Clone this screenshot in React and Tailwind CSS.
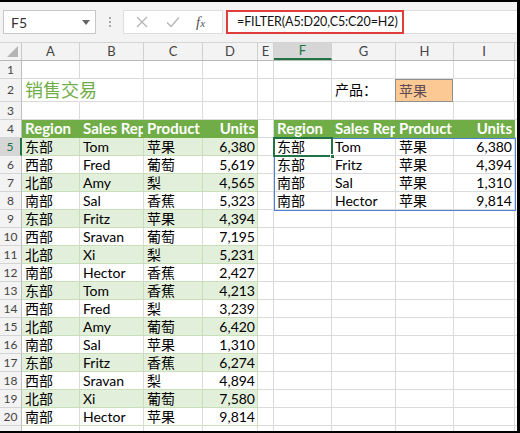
import React from 'react';

const COLS = [
    { key: 'A', w: 'w-[58px]' },
    { key: 'B', w: 'w-[64px]' },
    { key: 'C', w: 'w-[59px]' },
    { key: 'D', w: 'w-[55px]' },
    { key: 'E', w: 'w-[16px]' },
    { key: 'F', w: 'w-[58px]' },
    { key: 'G', w: 'w-[64px]' },
    { key: 'H', w: 'w-[58px]' },
    { key: 'I', w: 'w-[61px]' },
];

const SALES = [
    ['东部', 'Tom', '苹果', '6,380'],
    ['西部', 'Fred', '葡萄', '5,619'],
    ['北部', 'Amy', '梨', '4,565'],
    ['南部', 'Sal', '香蕉', '5,323'],
    ['东部', 'Fritz', '苹果', '4,394'],
    ['西部', 'Sravan', '葡萄', '7,195'],
    ['北部', 'Xi', '梨', '5,231'],
    ['南部', 'Hector', '香蕉', '2,427'],
    ['东部', 'Tom', '香蕉', '4,213'],
    ['西部', 'Fred', '梨', '3,239'],
    ['北部', 'Amy', '葡萄', '6,420'],
    ['南部', 'Sal', '苹果', '1,310'],
    ['东部', 'Fritz', '香蕉', '6,274'],
    ['西部', 'Sravan', '梨', '4,894'],
    ['北部', 'Xi', '葡萄', '7,580'],
    ['南部', 'Hector', '苹果', '9,814'],
];

const FILTERED = [
    ['东部', 'Tom', '苹果', '6,380'],
    ['东部', 'Fritz', '苹果', '4,394'],
    ['南部', 'Sal', '苹果', '1,310'],
    ['南部', 'Hector', '苹果', '9,814'],
];

const HEADERS = ['Region', 'Sales Rep', 'Product', 'Units'];

const GRID = 'border-[#dadada]';
const HEAD = 'bg-[#70ad47] text-white font-bold text-[15px] border-[#70ad47]';
const BAND = 'bg-[#e2efda] border-[#c9dfba]';
const PLAIN = 'bg-white border-r-[#dadada] border-b-[#c9dfba]';

// builds the 9 cells (A..I) for one sheet row
function buildRow(n) {
    const cells = COLS.map(() => ({ text: '', cls: GRID }));

    if (n === 2) {
        cells[0] = { text: '销售交易', cls: 'border-b-[#dadada] border-r-transparent overflow-visible text-[18px] text-[#70ad47]', wide: true };
        cells[6] = { text: '产品：', cls: GRID };
        cells[7] = { text: '苹果', cls: 'bg-[#fcc995] border-[#8f8f8f] border-l border-t -ml-px text-[#5e4a52]' };
    }
    if (n === 4) {
        [0, 1, 2, 3, 5, 6, 7, 8].forEach((i) => {
            const h = HEADERS[i > 4 ? i - 5 : i];
            cells[i] = { text: h, cls: HEAD, right: h === 'Units' };
        });
    }
    if (n >= 5 && n <= 20) {
        const rec = SALES[n - 5];
        const style = n % 2 === 1 ? BAND : PLAIN;
        rec.forEach((t, i) => {
            cells[i] = { text: t, cls: style, right: i === 3 };
        });
        cells[3].cls = style + ' !border-r-[#c9dfba]';
    }
    if (n >= 5 && n <= 8) {
        FILTERED[n - 5].forEach((t, i) => {
            cells[5 + i] = { text: t, cls: GRID, right: i === 3 };
        });
    }
    return cells;
}

function SheetRow({ n }) {
    const cells = buildRow(n);
    const active = n === 5;
    return (
        <div className={`flex ${n === 2 ? 'h-[23px]' : 'h-[18px]'}`}>
            <div
                className={`w-[22px] shrink-0 flex items-center justify-center text-[12px] border-b border-[#d4d4d4] ${
                    active ? 'bg-[#d6d6d6] text-[#217346] border-r-2 border-r-[#217346]' : 'bg-[#f3f3f3] text-[#444] border-r border-r-[#bdbdbd]'
                }`}
            >
                {n <= 20 ? n : ''}
            </div>
            {cells.map((c, i) => (
                <div
                    key={i}
                    className={`${COLS[i].w} shrink-0 border-r border-b flex items-center whitespace-nowrap px-[3px] text-[14px] leading-none ${
                        c.wide ? 'relative z-10' : 'overflow-hidden'
                    } ${c.right ? 'justify-end pr-[2px]' : ''} ${c.cls}`}
                >
                    {c.text}
                </div>
            ))}
            <div className="flex-1 border-b border-[#dadada]" />
        </div>
    );
}

function ColumnHeaders() {
    return (
        <div className="flex h-[18px] bg-[#f3f3f3] border-b border-[#b9b9b9]">
            <div className="w-[22px] shrink-0 border-r border-[#c8c8c8] relative">
                <svg className="absolute right-[3px] bottom-[3px]" width="11" height="11" viewBox="0 0 11 11">
                    <path d="M11 0 L11 11 L0 11 Z" fill="#b5b5b5" />
                </svg>
            </div>
            {COLS.map((c) => (
                <div
                    key={c.key}
                    className={`${c.w} shrink-0 flex items-center justify-center text-[13px] border-r border-[#d0d0d0] ${
                        c.key === 'F' ? 'bg-[#d6d6d6] text-[#217346] border-b-2 border-b-[#217346]' : 'text-[#444]'
                    }`}
                >
                    {c.key}
                </div>
            ))}
            <div className="flex-1" />
        </div>
    );
}

function FormulaBar() {
    return (
        <div className="h-[41px] bg-[#f3f3f3] flex items-center pl-[3px] border-b border-[#d4d4d4]">
            <div className="w-[93px] h-[24px] bg-white border border-[#c8c8c8] flex items-center justify-between pl-[7px] pr-[5px] text-[14px] text-[#333]">
                <span>F5</span>
                <svg width="8" height="5" viewBox="0 0 8 5">
                    <path d="M0 0 H8 L4 5 Z" fill="#666" />
                </svg>
            </div>
            <div className="w-[27px] flex flex-col items-center gap-[2px]">
                <span className="w-[2px] h-[2px] bg-[#a8a8a8]" />
                <span className="w-[2px] h-[2px] bg-[#a8a8a8]" />
                <span className="w-[2px] h-[2px] bg-[#a8a8a8]" />
            </div>
            <div className="w-[100px] h-[24px] bg-white border border-[#dedede] flex items-center">
                <svg className="ml-[12px]" width="12" height="12" viewBox="0 0 12 12">
                    <path d="M1 1 L11 11 M11 1 L1 11" stroke="#b4b4b4" strokeWidth="1.3" fill="none" />
                </svg>
                <svg className="ml-[18px]" width="14" height="12" viewBox="0 0 14 12">
                    <path d="M1 6.5 L5 10.5 L13 1.5" stroke="#b4b4b4" strokeWidth="1.3" fill="none" />
                </svg>
                <span className="ml-[16px] text-[15px] italic text-[#555]" style={{ fontFamily: '"Liberation Serif", serif' }}>
                    f<span className="text-[11px]">x</span>
                </span>
            </div>
            <div className="ml-[3px] flex-1 h-[24px] bg-white border-t border-b border-[#dedede] flex items-center">
                <div className="w-[178px] h-[24px] border-2 border-[#e03c3c] flex items-center pl-[9px] text-[12.5px] tracking-[-0.1px] text-[#111] whitespace-nowrap">
                    =FILTER(A5:D20,C5:C20=H2)
                </div>
            </div>
        </div>
    );
}

export default function App() {
    const rows = Array.from({ length: 21 }, (_, i) => i + 1);
    return (
        <div
            className="relative w-[520px] h-[433px] overflow-hidden bg-white border-t-2 border-r-[3px] border-b-2 border-black"
            style={{ fontFamily: 'Lato, "Noto Sans CJK SC", sans-serif' }}
        >
            <FormulaBar />
            <ColumnHeaders />
            {rows.map((n) => (
                <SheetRow key={n} n={n} />
            ))}

            {/* spill range outline */}
            <div className="absolute left-[274px] top-[136px] w-[242px] h-[73px] border border-[#4f7fd0] pointer-events-none" />
            {/* active cell */}
            <div className="absolute left-[273px] top-[135px] w-[60px] h-[20px] border-2 border-[#217346] pointer-events-none">
                <span className="absolute -right-[4px] -bottom-[4px] w-[5px] h-[5px] bg-[#217346] border border-white" />
            </div>
        </div>
    );
}
